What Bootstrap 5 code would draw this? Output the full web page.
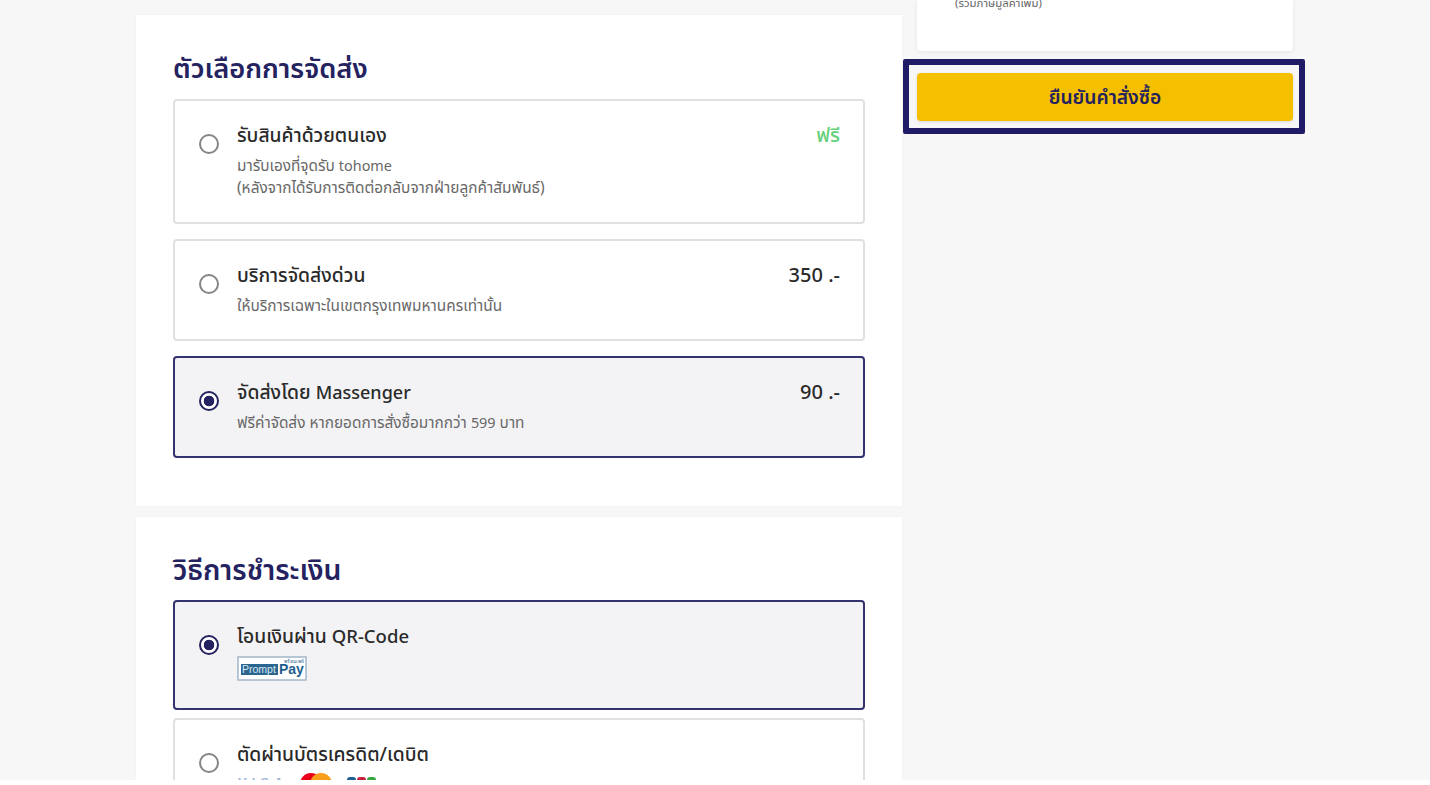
<!DOCTYPE html>
<html lang="th"><head><meta charset="utf-8"><title>Checkout</title>
<link href="https://cdn.jsdelivr.net/npm/bootstrap@5.3.0/dist/css/bootstrap.min.css" rel="stylesheet">
<style>
html,body{background:#fff;height:785px;overflow:hidden}
body{font-family:"Noto Sans","Noto Sans Thai",Inter,sans-serif;color:#2a2a2a}
.stage{height:780px;overflow:hidden;background:#f7f7f7;padding-left:136px;gap:15px}
.leftcol{width:766px;padding-top:15px}
.rightcol{width:376px}
.panel{background:#fff;padding:37px;padding-bottom:48px;box-shadow:0 0 3px rgba(0,0,0,.04)}
.panel+.panel{margin-top:11px}
.ptitle{font-size:27.3px;line-height:34px;font-weight:600;color:#24225f;margin:-1px 0 14px}
.ptitle.second{font-size:28.3px;margin:-2px 0 14px}
.opt{border:2px solid #e0e0e0;border-radius:4px;background:#fff;padding:21px 23px 0 24px;gap:18px}
.opt+.opt{margin-top:15px}
.opt.tight+.opt{margin-top:8px}
.opt.sel{border-color:#34326f;background:#f3f3f6}
.opt .form-check-input{width:20px;height:20px;margin:12px 0 0;flex:none;border:2px solid #858585;background-color:#fff}
.opt .form-check-input:checked{border-color:#24225f;background-color:#fff;background-image:radial-gradient(circle,#24225f 0 5px,transparent 5.6px)}
.otitle{font-size:19.3px;line-height:26px;font-weight:500;color:#2a2a2a}
.lat{font-size:18.5px}
.latm{font-size:18px}
.odesc{font-size:15.4px;line-height:22px;color:#686868;margin-top:7px}
.latd{font-size:14.4px}
.oprice{font-size:20px;line-height:26px;font-weight:500;color:#2a2a2a}
.freeprice{color:#63d17a}
.h125{height:125px}.h102{height:102px}.h110{height:110px}
.summary{height:51px;background:#fff;border-radius:0 0 4px 4px;box-shadow:0 1px 4px rgba(0,0,0,.08);padding-left:38px;overflow:hidden}
.vatnote{font-size:11.4px;line-height:14px;color:#666;margin-top:-4px}
.focusbox{margin:8px -12px 0 -14px;border:6px solid #1f1b66;border-radius:2px;padding:8px 6px 7px 8px;background:#f7f7f8;height:75px}
.confirm{height:48px;background:#f5c000;color:#24225f;font-weight:600;font-size:19.2px;border:0;border-radius:4px;box-shadow:0 1px 3px rgba(0,0,0,.12)}
.ppay{display:block;margin-top:7px}
.cardlogos{margin-top:5px}
</style></head>
<body>
<div class="stage d-flex align-items-start">
  <div class="leftcol">
    <section class="panel">
      <h2 class="ptitle">ตัวเลือกการจัดส่ง</h2>
      <label class="opt h125 d-flex">
        <input class="form-check-input" type="radio" name="ship">
        <div class="flex-grow-1"><div class="otitle">รับสินค้าด้วยตนเอง</div><div class="odesc">มารับเองที่จุดรับ <span class="latd">tohome</span><br>(หลังจากได้รับการติดต่อกลับจากฝ่ายลูกค้าสัมพันธ์)</div></div>
        <div class="oprice freeprice">ฟรี</div>
      </label>
      <label class="opt h102 d-flex">
        <input class="form-check-input" type="radio" name="ship">
        <div class="flex-grow-1"><div class="otitle">บริการจัดส่งด่วน</div><div class="odesc">ให้บริการเฉพาะในเขตกรุงเทพมหานครเท่านั้น</div></div>
        <div class="oprice">350 .-</div>
      </label>
      <label class="opt sel h102 d-flex">
        <input class="form-check-input" type="radio" name="ship" checked>
        <div class="flex-grow-1"><div class="otitle">จัดส่งโดย <span class="latm">Massenger</span></div><div class="odesc">ฟรีค่าจัดส่ง หากยอดการสั่งซื้อมากกว่า <span class="latd">599</span> บาท</div></div>
        <div class="oprice">90 .-</div>
      </label>
    </section>
    <section class="panel">
      <h2 class="ptitle second">วิธีการชำระเงิน</h2>
      <label class="opt sel tight h110 d-flex">
        <input class="form-check-input" type="radio" name="pay" checked>
        <div class="flex-grow-1"><div class="otitle">โอนเงินผ่าน <span class="lat">QR-Code</span></div>
          <svg class="ppay" width="70" height="25" viewBox="0 0 70 25"><rect x="1" y="1" width="68" height="23" fill="#fff" stroke="#a3b7c8" stroke-width="1.5"/><rect x="4" y="8" width="37" height="11" fill="#2a6690"/><text x="5" y="17" font-family="Liberation Sans" font-size="10.5" fill="#d8e6f0">Prompt</text><text x="42" y="18" font-family="Liberation Sans" font-weight="700" font-size="14" fill="#1f5f8f">Pay</text><text x="47" y="6.5" font-family="Noto Sans" font-size="5" fill="#1f5f8f">พร้อมเพย์</text></svg>
        </div>
      </label>
      <label class="opt h110 d-flex">
        <input class="form-check-input" type="radio" name="pay">
        <div class="flex-grow-1"><div class="otitle">ตัดผ่านบัตรเครดิต/เดบิต</div>
          <svg class="cardlogos d-block" width="150" height="24" viewBox="0 0 150 24"><text x="1" y="15" font-family="Liberation Sans" font-weight="700" font-size="13" fill="#9db8d8" letter-spacing="5">VISA</text><circle cx="74" cy="12" r="11" fill="#eb001b"/><circle cx="84" cy="12" r="11" fill="#f79e1b"/><rect x="110" y="5" width="9" height="18" rx="3" fill="#1b5f95"/><rect x="120" y="5" width="9" height="18" rx="3" fill="#c8233f"/><rect x="130" y="5" width="9" height="18" rx="3" fill="#3aa63f"/></svg>
        </div>
      </label>
    </section>
  </div>
  <aside class="rightcol">
    <div class="summary"><div class="vatnote">(รวมภาษีมูลค่าเพิ่ม)</div></div>
    <div class="focusbox"><button class="confirm w-100 btn" type="button">ยืนยันคำสั่งซื้อ</button></div>
  </aside>
</div>
<script src="https://cdn.jsdelivr.net/npm/bootstrap@5.3.0/dist/js/bootstrap.bundle.min.js"></script>
</body></html>
